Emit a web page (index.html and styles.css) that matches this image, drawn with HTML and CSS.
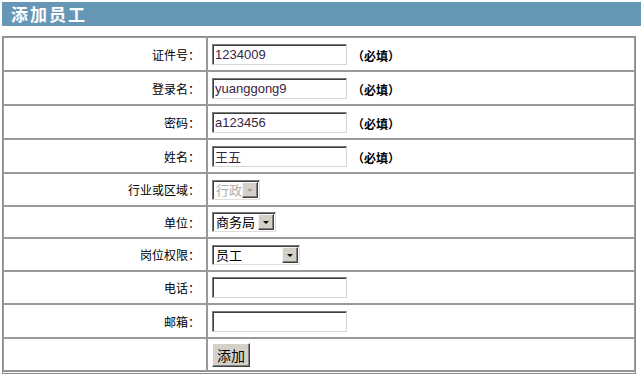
FILE: index.html
```html
<!DOCTYPE html>
<html lang="zh-CN">
  <head>
    <meta charset="UTF-8" />
    <meta name="viewport" content="width=device-width, initial-scale=1.0" />
    <title>添加员工</title>

    <link rel="stylesheet" href="styles.css">
  </head>
  <body>
    <section class="panel">
      <div class="panel__title">添加员工</div>

      <form action="#">
        <table class="form-table">
          <tr>
            <td class="form-table__label">证件号：</td>
            <td class="form-table__field">
              <input class="text-input" type="text" value="1234009" /><span class="required">（必填）</span>
            </td>
          </tr>
          <tr>
            <td class="form-table__label">登录名：</td>
            <td class="form-table__field">
              <input class="text-input" type="text" value="yuanggong9" /><span class="required">（必填）</span>
            </td>
          </tr>
          <tr>
            <td class="form-table__label">密码：</td>
            <td class="form-table__field">
              <input class="text-input" type="text" value="a123456" /><span class="required">（必填）</span>
            </td>
          </tr>
          <tr>
            <td class="form-table__label">姓名：</td>
            <td class="form-table__field">
              <input class="text-input" type="text" value="王五" /><span class="required">（必填）</span>
            </td>
          </tr>
          <tr class="row--select">
            <td class="form-table__label">行业或区域：</td>
            <td class="form-table__field">
              <span class="combo combo--sm combo--disabled">
                <select disabled><option>行政</option></select>
                <span class="combo__btn"></span>
              </span>
            </td>
          </tr>
          <tr class="row--select row--tight">
            <td class="form-table__label">单位：</td>
            <td class="form-table__field">
              <span class="combo combo--md">
                <select><option>商务局</option></select>
                <span class="combo__btn"></span>
              </span>
            </td>
          </tr>
          <tr class="row--select">
            <td class="form-table__label">岗位权限：</td>
            <td class="form-table__field">
              <span class="combo combo--lg">
                <select><option>员工</option></select>
                <span class="combo__btn"></span>
              </span>
            </td>
          </tr>
          <tr class="row--select">
            <td class="form-table__label">电话：</td>
            <td class="form-table__field">
              <input class="text-input" type="text" value="" />
            </td>
          </tr>
          <tr>
            <td class="form-table__label">邮箱：</td>
            <td class="form-table__field">
              <input class="text-input" type="text" value="" />
            </td>
          </tr>
          <tr class="row--select">
            <td class="form-table__label"></td>
            <td class="form-table__field">
              <button class="btn" type="button">添加</button>
            </td>
          </tr>
        </table>
      </form>
    </section>
  </body>
</html>
```

FILE: styles.css
```css
html,
body {
  margin: 0;
  font-family: "Liberation Sans", "Noto Sans CJK SC", sans-serif;
  font-size: 12px;
  color: #000;
  background: #fff;
}

.panel {
  padding: 2px 0 0 2px;
}

.panel__title {
  height: 24px;
  line-height: 24px;
  padding-left: 9px;
  background: #6797b6;
  color: #fff;
  font-family: "Noto Sans CJK SC", sans-serif;
  font-size: 17px;
  font-weight: bold;
  letter-spacing: 2px;
  margin-bottom: 10px;
}

.form-table {
  width: 634px;
  border-collapse: separate;
  border-spacing: 0;
  border: 1px solid #8c8c8c;
  border-bottom: 3px double #8c8c8c;
}

.form-table td {
  border: 1px solid #9a9a9a;
  height: 32px;
  padding: 0;
  vertical-align: middle;
}
.form-table .row--select td {
  height: 31px;
}
.form-table .row--tight td {
  height: 30px;
}

.form-table__label {
  width: 196px;
  padding-right: 6px !important;
  text-align: right;
  font-family: "Noto Sans CJK SC", sans-serif;
  font-size: 12px;
}

.form-table__field {
  padding-left: 4px !important;
}

.text-input {
  box-sizing: border-box;
  width: 135px;
  height: 21px;
  margin: 0;
  padding: 1px 2px 0;
  border: 1px solid;
  border-color: #7a7a7a #d8d6d0 #d8d6d0 #7a7a7a;
  box-shadow: inset 1px 1px 0 #404040;
  font-family: "Liberation Sans", "Noto Sans CJK SC", sans-serif;
  font-size: 13px;
  color: #3a2545;
  vertical-align: middle;
  outline: none;
}

.required {
  margin-left: 5px;
  font-family: "Noto Sans CJK SC", sans-serif;
  font-size: 12px;
  font-weight: bold;
  vertical-align: -4px;
}

/* fake classic combobox */
.combo {
  display: inline-flex;
  box-sizing: border-box;
  height: 20px;
  border: 1px solid;
  border-color: #7a7a7a #e0ded8 #e0ded8 #7a7a7a;
  box-shadow: inset 1px 1px 0 #404040;
  padding: 1px 1px 1px 1px;
  background: #fff;
  vertical-align: middle;
}
.combo--sm {
  width: 48px;
}
.combo--md {
  width: 64px;
}
.combo--lg {
  width: 88px;
}

.combo select {
  appearance: none;
  -webkit-appearance: none;
  flex: 1;
  min-width: 0;
  margin: 0;
  padding: 0 0 0 2px;
  border: none;
  background: transparent;
  font-family: "Noto Sans CJK SC", sans-serif;
  font-size: 13px;
  line-height: 16px;
  color: #000;
  outline: none;
}

.combo__btn {
  position: relative;
  box-sizing: border-box;
  width: 16px;
  background: #d4d0c8;
  border: 1px solid;
  border-color: #f4f4f4 #404040 #404040 #f4f4f4;
  box-shadow: inset -1px -1px 0 #808080;
}
.combo__btn::after {
  content: "";
  position: absolute;
  left: 4px;
  top: 6px;
  border-left: 3px solid transparent;
  border-right: 3px solid transparent;
  border-top: 3px solid #000;
}

.combo--disabled select {
  color: #8a8a8a;
}
.combo--disabled .combo__btn::after {
  border-top-color: #a0a0a0;
}

.btn {
  box-sizing: border-box;
  width: 38px;
  height: 24px;
  margin: 0;
  padding: 0;
  background: #d4d0c8;
  border: 1px solid;
  border-color: #fff #404040 #404040 #fff;
  box-shadow: inset -1px -1px 0 #808080;
  font-family: "Noto Sans CJK SC", sans-serif;
  font-size: 14px;
  color: #000;
  vertical-align: middle;
}
```
